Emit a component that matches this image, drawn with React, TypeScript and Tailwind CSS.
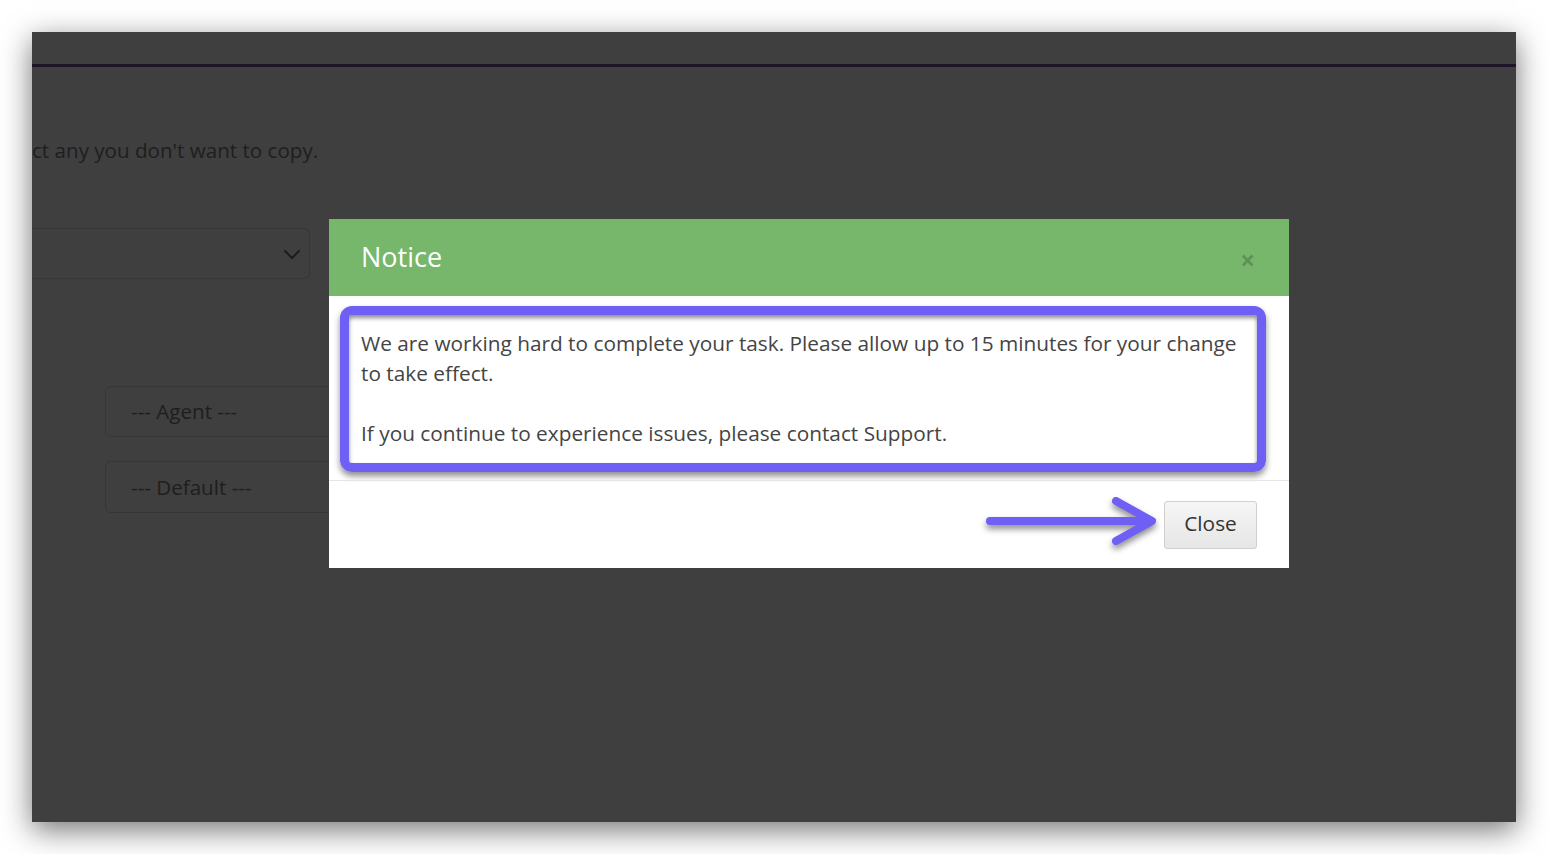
import React from 'react';

const font = { fontFamily: '"Open Sans", "Noto Sans", sans-serif' };

const ChevronDown = () => (
  <svg width="18" height="12" viewBox="0 0 18 12" fill="none">
    <path d="M2 3l7 7 7-7" stroke="#1c1c1c" strokeWidth="2" strokeLinecap="round" strokeLinejoin="round" />
  </svg>
);

// Hand-drawn style callout arrow pointing at the close button
const CalloutArrow = () => (
  <svg width="190" height="60" viewBox="0 0 190 60" fill="none" className="drop-shadow-[0_4px_3px_rgba(0,0,0,0.45)]">
    <path d="M8 30 L168 30" stroke="#6f5ff4" strokeWidth="8" strokeLinecap="round" />
    <path d="M134 10 L170 30 L134 50" stroke="#6f5ff4" strokeWidth="8" strokeLinecap="round" strokeLinejoin="round" />
  </svg>
);

const NoticeModal = () => (
  <div className="absolute left-[297px] top-[187px] w-[960px] bg-white">
    <div className="flex h-[77px] items-center justify-between bg-[#76b76b] pl-8 pr-[34px]">
      <h4 className="text-[27px] text-white">Notice</h4>
      <button className="mt-1 text-[26px] font-bold leading-none text-black opacity-20">×</button>
    </div>

    <div className="relative pl-8 pr-10 pt-8 pb-8 text-[20.8px] leading-[30px] text-[#444]">
      <p>We are working hard to complete your task. Please allow up to 15 minutes for your change to take effect.</p>
      <p className="mt-[30px]">If you continue to experience issues, please contact Support.</p>
      {/* highlight frame drawn over the message */}
      <div className="pointer-events-none absolute left-[11px] top-[10px] h-[166px] w-[926px] rounded-[12px] border-[9px] border-[#6f5ff4] shadow-[0_4px_6px_rgba(0,0,0,0.45),inset_0_3px_4px_rgba(0,0,0,0.45)]" />
    </div>

    <div className="relative flex h-[88px] items-start justify-end border-t border-[#e5e5e5] pt-5 pr-8">
      <div className="absolute left-[653px] top-[10px]">
        <CalloutArrow />
      </div>
      <button className="h-[48px] w-[93px] rounded-[3px] border border-[#cfcfcf] bg-gradient-to-b from-[#f6f6f6] to-[#e6e6e6] pb-0.5 text-[20.8px] text-[#333]">
        Close
      </button>
    </div>
  </div>
);

export default function App() {
  return (
    <div className="h-[854px] w-full bg-white p-8" style={font}>
      <div className="relative h-[790px] overflow-hidden bg-[#3f3f3f] shadow-[0_8px_28px_rgba(0,0,0,0.55)]">
        <div className="h-[35px] border-b-[3px] border-[#1d1527]" />

        <p className="mt-[68px] text-[20.6px] leading-[30px] text-[#1e1e1e]">ct any you don't want to copy.</p>

        <div className="mt-[63px] flex h-[51px] w-[278px] items-center justify-end rounded-r-[6px] border border-l-0 border-[#363636] pr-2">
          <ChevronDown />
        </div>

        <div className="ml-[73px] mt-[107px] flex flex-col gap-[24px]">
          <div className="flex h-[51px] w-[300px] items-center rounded-[6px] border border-[#363636] px-[25px] text-[20.6px] text-[#1e1e1e]">
            --- Agent ---
          </div>
          <div className="flex h-[52px] w-[300px] items-center rounded-[6px] border border-[#363636] px-[25px] text-[20.6px] text-[#1e1e1e]">
            --- Default ---
          </div>
        </div>

        <NoticeModal />
      </div>
    </div>
  );
}
